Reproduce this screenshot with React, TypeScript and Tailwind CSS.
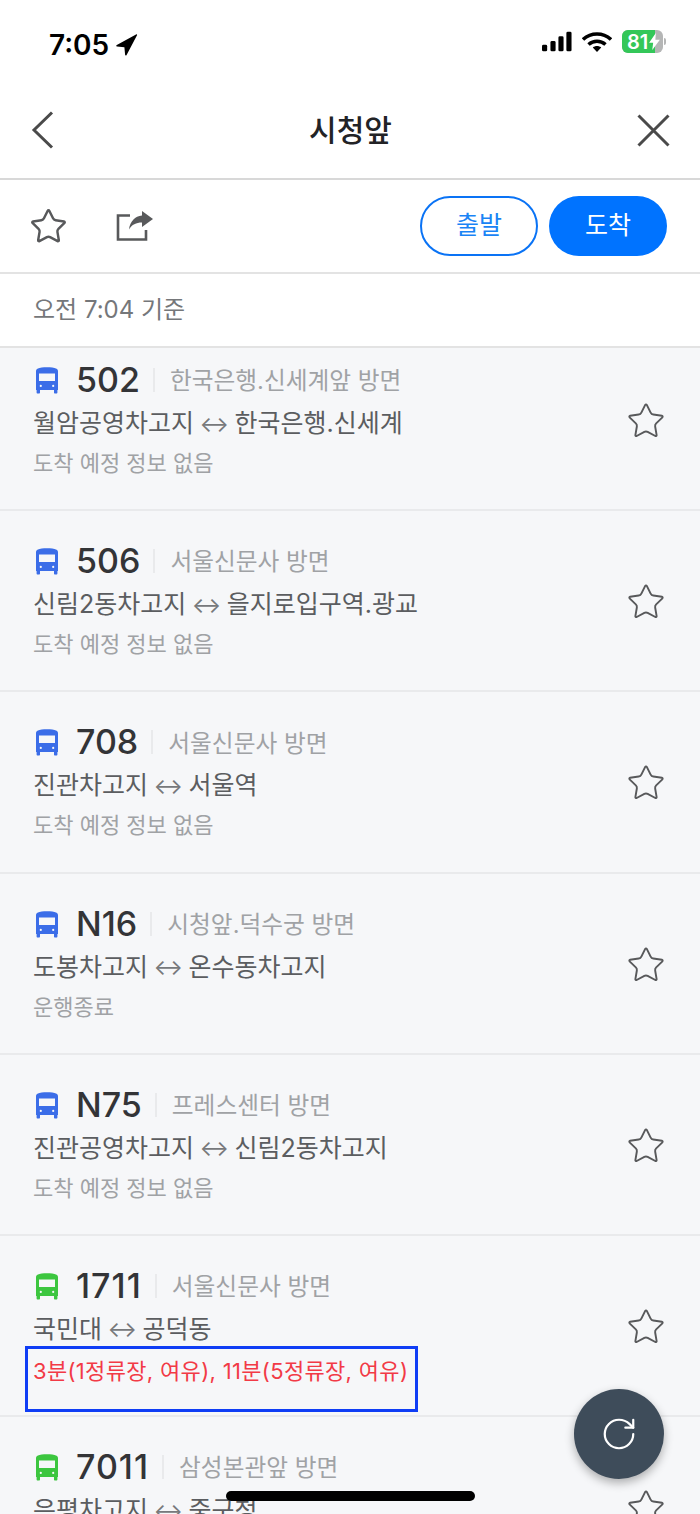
import { RotateCw, Star } from "lucide-react";

const font = { fontFamily: '"Inter", "Noto Sans CJK KR", sans-serif' };

type Route = {
  no: string;
  dir: string;
  from: string;
  to: string;
  info: string;
  green?: boolean;
  live?: boolean;
};

const routes: Route[] = [
  { no: "506", dir: "서울신문사 방면", from: "신림2동차고지", to: "을지로입구역.광교", info: "도착 예정 정보 없음" },
  { no: "708", dir: "서울신문사 방면", from: "진관차고지", to: "서울역", info: "도착 예정 정보 없음" },
  { no: "N16", dir: "시청앞.덕수궁 방면", from: "도봉차고지", to: "온수동차고지", info: "운행종료" },
  { no: "N75", dir: "프레스센터 방면", from: "진관공영차고지", to: "신림2동차고지", info: "도착 예정 정보 없음" },
  { no: "1711", dir: "서울신문사 방면", from: "국민대", to: "공덕동", info: "3분(1정류장, 여유), 11분(5정류장, 여유)", green: true, live: true },
  { no: "7011", dir: "삼성본관앞 방면", from: "은평차고지", to: "중구청", info: "", green: true },
];

const BusIcon = ({ green }: { green?: boolean }) => (
  <svg width="24" height="28" viewBox="0 0 24 28" className={green ? "ml-[2px] shrink-0 text-[#3cc63f]" : "ml-[2px] shrink-0 text-[#3b6de8]"}>
    <path
      fill="currentColor"
      fillRule="evenodd"
      d="M3 2.500C6 .8 18 .8 21 2.500c1.600.8 2 1.600 2 3V24h-.6v2.400c0 .8-.4 1.100-1.100 1.100h-1.200c-.7 0-1.100-.3-1.100-1.100V24H5v2.400c0 .8-.4 1.100-1.100 1.100H2.700c-.7 0-1.100-.3-1.100-1.100V24H1V5.500c0-1.400.4-2.200 2-3ZM4 7.500v7.500h16V7.500H4ZM5.800 18.800a1.100 1.100 0 1 0 0 2.200 1.100 1.100 0 0 0 0-2.200Zm12.400 0a1.100 1.100 0 1 0 0 2.200 1.100 1.100 0 0 0 0-2.200Z"
    />
  </svg>
);

const RouteRow = ({ r, first }: { r: Route; first?: boolean }) => (
  <div className={`relative flex h-[181.2px] shrink-0 items-start justify-between border-b-2 border-[#e9eaec] pr-[34px] pl-[33px] ${first ? "-mt-[18px]" : ""}`}>
    <div className="min-w-0 pt-[30px]">
      <div className="flex h-[40px] items-center">
        <BusIcon green={r.green} />
        <span className={`ml-[17px] text-[34px] leading-none font-medium text-[#333437] ${r.green ? "tracking-[1px]" : ""}`}>{r.no}</span>
        <span className="mr-[15px] ml-[13px] h-[24px] w-[2px] bg-[#e9eaec]" />
        <span className="pt-[2px] text-[23.7px] leading-none text-[#a0a2a5]">{r.dir}</span>
      </div>
      <div className="mt-[6px] flex h-[35px] items-center text-[25px] leading-[35px] whitespace-nowrap text-[#5b5d60]">
        <span>{r.from}</span>
        <span className="mx-[5.5px] text-[22px] leading-none text-[#77797c]">↔</span>
        <span>{r.to}</span>
      </div>
      <div className={r.live ? "mt-[10px] text-[22px] leading-[28px] tracking-[0.33px] whitespace-nowrap text-[#f23a46]" : "mt-[8px] text-[22px] leading-[28px] whitespace-nowrap text-[#a0a2a5]"}>
        {r.info}
      </div>
    </div>
    <Star size={40} strokeWidth={1.15} className="mt-[71px] shrink-0 text-[#58595b]" />
    {r.live && <div className="absolute top-[110px] left-[25px] h-[66px] w-[393px] border-[3px] border-[#0f3df5]" />}
  </div>
);

export default function App() {
  return (
    <div style={font} className="relative flex h-[1514px] w-[700px] flex-col overflow-hidden bg-[#f6f7f9]">
      {/* Status bar */}
      <div className="flex h-[90px] shrink-0 items-start justify-between bg-white pt-[30px] pr-[34px] pl-[49px]">
        <div className="flex items-center gap-[7px]">
          <span className="text-[28px] leading-[30px] font-semibold text-black">7:05</span>
          <svg width="22" height="22" viewBox="0 0 22 22">
            <path fill="#000" d="M21 1.300 10.600 21c-.5.9-1.400.7-1.500-.2L8.400 13.300 1 12.400c-1-.1-1.100-1-.2-1.500L20 .5c.8-.4 1.400.1 1 .8Z" />
          </svg>
        </div>
        <div className="flex items-center gap-[10px]">
          <svg width="30" height="21" viewBox="0 0 32 21">
            <rect x="0" y="14" width="5.500" height="7" rx="1.500" />
            <rect x="9" y="10" width="5.500" height="11" rx="1.500" />
            <rect x="17.500" y="5" width="5.500" height="16" rx="1.500" />
            <rect x="26" y="0" width="5.500" height="21" rx="1.500" />
          </svg>
          <svg width="30" height="22" viewBox="0 0 30 22">
            <path fill="none" stroke="#000" strokeWidth="3.600" d="M1 8.500c8-7.400 20-7.400 28 0M6.500 13.500c5-4.300 12-4.300 17 0" />
            <path d="M10.800 16.500c2.500-2 5.900-2 8.400 0L15 21Z" />
          </svg>
          <div className="flex items-center">
            <div className="relative flex h-[23px] w-[41px] items-center overflow-hidden rounded-[6px] bg-[#b5b6b6]">
              <div className="flex h-full w-[33px] items-center bg-[#34c759] pl-[5px] text-[20px] leading-none font-semibold text-white">81</div>
              <svg width="11" height="17" viewBox="0 0 12 19" className="absolute left-[27px]">
                <path fill="#fff" d="M7.500 0 0 11h4.500L3.500 19 12 7.500H7Z" />
              </svg>
            </div>
            <div className="ml-[1px] h-[7px] w-[2px] rounded-r-full bg-[#b5b6b6]" />
          </div>
        </div>
      </div>

      {/* Title bar */}
      <div className="flex h-[90px] shrink-0 items-center justify-between border-b-[2px] border-[#d8d8d8] bg-white pr-[30px] pb-[8px] pl-[31px]">
        <div className="w-[40px]">
          <svg width="23" height="38" viewBox="0 0 23 38" fill="none">
            <path stroke="#4a4a4a" strokeWidth="3" d="M21 1.500 3 19l18 17.500" />
          </svg>
        </div>
        <h1 className="text-[30px] leading-none font-medium text-[#222326]">시청앞</h1>
        <div className="flex w-[40px] justify-end">
          <svg width="33" height="33" viewBox="0 0 33 33" fill="none">
            <path stroke="#4a4a4a" strokeWidth="3" d="m1.500 1.500 30 30M31.500 1.500l-30 30" />
          </svg>
        </div>
      </div>

      {/* Toolbar */}
      <div className="flex h-[94px] shrink-0 items-center justify-between border-b-2 border-[#e3e3e3] bg-white pr-[33px] pl-[29px]">
        <div className="flex items-center gap-[48px]">
          <Star size={39} strokeWidth={1.5} className="text-[#58595b]" />
          <svg width="38" height="32" viewBox="0 0 38 32" fill="none">
            <path stroke="#58595b" strokeWidth="2.600" d="M14 5.500H2v24h28V20" />
            <path fill="#58595b" d="M26 1l11 8-11 8v-4.500c-6 0-10 2-13 7 1-8 6-13.500 13-14Z" />
          </svg>
        </div>
        <div className="flex items-center gap-[11px]">
          <button className="h-[60px] w-[118px] rounded-full border-2 border-[#0a73f5] bg-white pb-[1px] text-[25px] text-[#1a84f5]">출발</button>
          <button className="h-[60px] w-[118px] rounded-full bg-[#0073ff] pb-[1px] text-[25px] text-white">도착</button>
        </div>
      </div>

      {/* Base time */}
      <div className="flex h-[74px] shrink-0 items-center border-b-2 border-[#e3e3e3] bg-white pl-[33px] text-[24px] text-[#75777a]">
        오전 7:04 기준
      </div>

      {/* Route list */}
      <div className="min-h-0 flex-1 overflow-hidden">
        <RouteRow first r={{ no: "502", dir: "한국은행.신세계앞 방면", from: "월암공영차고지", to: "한국은행.신세계", info: "도착 예정 정보 없음" }} />
        {routes.map((r) => (
          <RouteRow key={r.no} r={r} />
        ))}
      </div>

      {/* Refresh button */}
      <button className="absolute top-[1389px] left-[574px] flex h-[90px] w-[90px] items-center justify-center rounded-full bg-[#3e4c5a] shadow-[0_4px_10px_rgba(0,0,0,0.3)]">
        <RotateCw size={38} strokeWidth={1.4} className="text-white" />
      </button>

      {/* Home indicator */}
      <div className="absolute top-[1491px] left-[226px] h-[10px] w-[249px] rounded-full bg-black" />
    </div>
  );
}
